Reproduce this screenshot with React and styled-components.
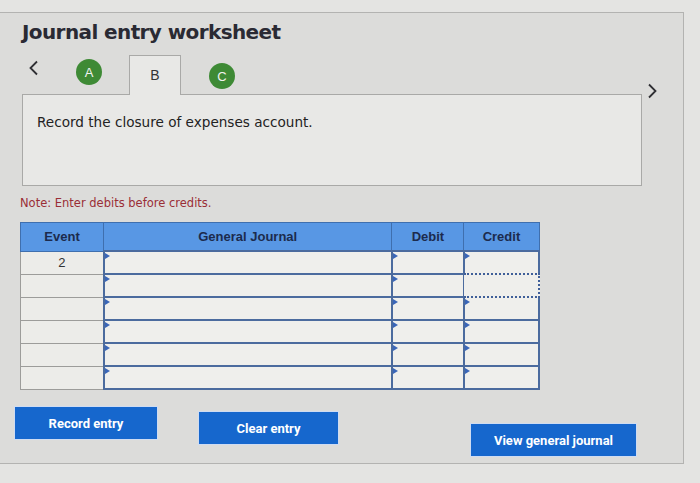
import styled, { createGlobalStyle } from "styled-components";

const GlobalStyle = createGlobalStyle`
  body {
    margin: 0;
    background: #e4e4e2;
    font-family: "DejaVu Sans", Verdana, sans-serif;
  }
`;

const rows = [
  { event: "2", focus: false },
  { event: "", focus: true },
  { event: "", focus: false },
  { event: "", focus: false },
  { event: "", focus: false },
  { event: "", focus: false },
];

const ChevronIcon = ({ dir }) => (
  <svg width="11" height="16" viewBox="0 0 11 16">
    <path
      d={dir === "left" ? "M9 1.5 L2.5 8 L9 14.5" : "M2 1.5 L8.5 8 L2 14.5"}
      fill="none"
      stroke="#2f2f33"
      strokeWidth="1.8"
    />
  </svg>
);

const App = () => {
  return (
    <>
      <GlobalStyle />
      <Panel>
        <Title>Journal entry worksheet</Title>
        <Middle>
          <LeftColumn>
            <TabsRow>
              <Chevron>
                <ChevronIcon dir="left" />
              </Chevron>
              <Circle>A</Circle>
              <ActiveTab>B</ActiveTab>
              <Circle $shift="8px">C</Circle>
            </TabsRow>
            <Prompt>Record the closure of expenses account.</Prompt>
          </LeftColumn>
          <NextArrow>
            <ChevronIcon dir="right" />
          </NextArrow>
        </Middle>
        <Note>Note: Enter debits before credits.</Note>
        <Table>
          <thead>
            <tr>
              <Head $w="82px">Event</Head>
              <Head $w="287px">General Journal</Head>
              <Head $w="71px">Debit</Head>
              <Head $w="74px">Credit</Head>
            </tr>
          </thead>
          <tbody>
            {rows.map((row, i) => (
              <tr key={i}>
                <EventCell>{row.event}</EventCell>
                <InputCell>
                  <Flag />
                </InputCell>
                <InputCell>
                  <Flag />
                </InputCell>
                <InputCell>{row.focus ? <Focus /> : <Flag />}</InputCell>
              </tr>
            ))}
          </tbody>
        </Table>
        <Buttons>
          <Button $w="142px">Record entry</Button>
          <Button $w="139px" $top="5px" $left="42px">
            Clear entry
          </Button>
          <Spacer />
          <Button $w="165px" $top="17px">
            View general journal
          </Button>
        </Buttons>
      </Panel>
    </>
  );
};

const Panel = styled.div`
  margin-top: 12px;
  width: 684px;
  height: 452px;
  box-sizing: border-box;
  background: #dcdcda;
  border: 1px solid #b3b3b1;
  border-left: none;
`;

const Title = styled.h1`
  margin: 0;
  padding: 7px 0 0 22px;
  font-size: 20px;
  line-height: 24px;
  letter-spacing: -0.6px;
  font-weight: bold;
  color: #2a2a33;
`;

const Middle = styled.div`
  display: flex;
  align-items: flex-start;
  margin-top: 11px;
  padding-left: 22px;
`;

const LeftColumn = styled.div`
  width: 620px;
  display: flex;
  flex-direction: column;
`;

const TabsRow = styled.div`
  display: flex;
  align-items: flex-start;
  height: 40px;
  padding-left: 6px;
`;

const Chevron = styled.span`
  display: flex;
  margin-top: 5px;
  width: 48px;
`;

const Circle = styled.span`
  display: flex;
  align-items: center;
  justify-content: center;
  width: 26px;
  height: 26px;
  margin-top: ${(p) => p.$shift || "4px"};
  border-radius: 50%;
  background: #3e8a35;
  color: #f2f2f2;
  font-family: "Liberation Sans", Arial, sans-serif;
  font-size: 13px;
`;

const ActiveTab = styled.span`
  position: relative;
  z-index: 1;
  display: flex;
  justify-content: center;
  width: 52px;
  height: 40px;
  margin: 0 28px 0 27px;
  padding-top: 11px;
  box-sizing: border-box;
  background: #e8e8e6;
  border: 1px solid #a9a9a7;
  border-bottom: none;
  font-family: "Liberation Sans", Arial, sans-serif;
  font-size: 14px;
  color: #333;
`;

const Prompt = styled.div`
  height: 92px;
  margin-top: -1px;
  box-sizing: border-box;
  padding: 19px 14px;
  background: #e8e8e6;
  border: 1px solid #a9a9a7;
  font-size: 13.6px;
  color: #222;
`;

const NextArrow = styled.span`
  display: flex;
  margin: 28px 0 0 5px;
`;

const Note = styled.div`
  margin: 10px 0 0 20px;
  font-size: 11.5px;
  color: #9a2e36;
`;

const Table = styled.table`
  margin: 12px 0 0 20px;
  border-collapse: collapse;
  table-layout: fixed;
  width: 520px;
  background: #ecece9;
`;

const Head = styled.th`
  width: ${(p) => p.$w};
  height: 27px;
  padding: 0;
  background: #5897e4;
  border: 1px solid #3f6fae;
  font-family: "Liberation Sans", Arial, sans-serif;
  font-size: 13px;
  font-weight: bold;
  color: #1c2b4d;
`;

const EventCell = styled.td`
  height: 21px;
  padding: 0;
  border: 1px solid #9c9c9a;
  text-align: center;
  font-family: "Liberation Sans", Arial, sans-serif;
  font-size: 13px;
  color: #333;
`;

const InputCell = styled.td`
  position: relative;
  height: 21px;
  padding: 0;
  background: #efefec;
  border: 2px solid #4b6b9e;
`;

const Flag = styled.span`
  position: absolute;
  top: 1px;
  left: 0;
  width: 0;
  height: 0;
  border-top: 3px solid transparent;
  border-bottom: 3px solid transparent;
  border-left: 5px solid #3a66b8;
`;

const Focus = styled.span`
  position: absolute;
  top: -2px;
  left: -1px;
  right: -2px;
  bottom: -2px;
  background: #efefec;
  border: 2px dotted #3f5f99;
  border-left: none;
`;

const Buttons = styled.div`
  display: flex;
  align-items: flex-start;
  margin: 17px 0 0 15px;
  width: 621px;
`;

const Spacer = styled.div`
  flex: 1;
`;

const Button = styled.button`
  width: ${(p) => p.$w};
  height: 32px;
  margin-top: ${(p) => p.$top || "0"};
  margin-left: ${(p) => p.$left || "0"};
  border: none;
  background: #1667cd;
  color: #fff;
  font-family: Roboto, "Liberation Sans", sans-serif;
  font-size: 13px;
  font-weight: bold;
  box-shadow: 0 0 0 1px #cfdcf2;
`;

export default App;
